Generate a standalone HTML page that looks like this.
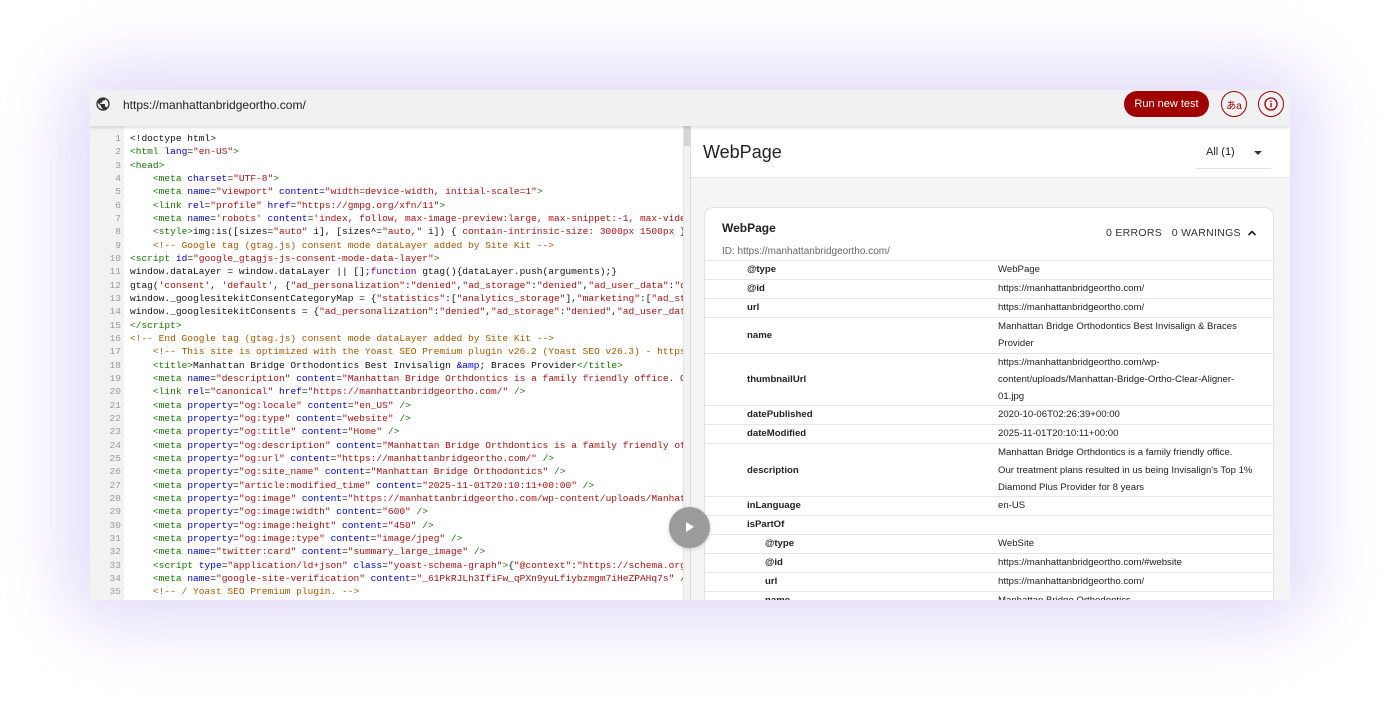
<!DOCTYPE html>
<html><head><meta charset="utf-8"><style>
*{margin:0;padding:0;box-sizing:border-box}
body{width:1400px;height:710px;background:#fff;position:relative;overflow:hidden;font-family:"Liberation Sans",sans-serif}
.glow{position:absolute;left:90px;top:90px;width:1200px;height:510px;border-radius:30px;box-shadow:0 0 60px 30px rgba(200,185,245,.45)}
.win{position:absolute;left:90px;top:90px;width:1200px;height:510px;background:#fff;overflow:hidden}
.top{position:absolute;left:0;top:0;width:1200px;height:36px;background:#f1f1f3;box-shadow:0 2px 3px rgba(0,0,0,.12);z-index:3}
.url{position:absolute;left:33px;top:8px;font-size:12px;color:#222}
.btn{position:absolute;left:1034px;top:1px;width:85px;height:26px;border-radius:13px;background:#a10000;color:#fff;font-size:11px;display:flex;align-items:center;justify-content:center}
.circ{position:absolute;top:1px;width:26px;height:26px;border-radius:50%;border:1.3px solid #a10000;color:#a10000;font-size:10px;display:flex;align-items:center;justify-content:center;white-space:nowrap;font-family:"Liberation Sans","Noto Sans CJK JP",sans-serif}
.code{position:absolute;left:0;top:36px;width:600px;height:474px;overflow:hidden;background:#fff}
.gut{position:absolute;left:0;top:0;width:34px;height:474px;background:#f2f2f2}
.lines{position:absolute;left:0;top:6px;font-family:"Liberation Mono",monospace;font-size:9.55px;line-height:13.33px;white-space:pre;color:#111}
.ln{display:inline-block;width:31px;text-align:right;color:#999;margin-right:9px}
.t{color:#170}.a{color:#00c}.s{color:#a11}.c{color:#a50}.k{color:#708}
.sb{position:absolute;left:593px;top:0;width:7px;height:474px;background:#f3f3f3;border-left:1px solid #e5e5e5}
.sb i{position:absolute;left:0;top:0;width:6px;height:20px;background:#d6d6d6}
.right{position:absolute;left:600px;top:36px;width:600px;height:474px;background:#f5f5f6;border-left:1px solid #ddd;overflow:hidden}
.hdr{position:absolute;left:0;top:0;width:600px;height:52px;background:#fff;border-bottom:1px solid #e6e6e6}
.hdr h1{position:absolute;left:12px;top:16px;font-weight:normal;font-size:18px;color:#222}
.all{position:absolute;left:505px;top:18px;width:75px;height:25px;border-bottom:1px solid #e0e0e0;font-size:11px;color:#222}
.card{position:absolute;left:13px;top:81px;width:570px;height:420px;background:#fff;border:1px solid #e3e3e3;border-radius:9px}
.ct{position:absolute;left:17px;top:13px;font-size:12px;font-weight:bold;color:#222}
.cid{position:absolute;left:17px;top:38px;font-size:10px;color:#666}
.err{position:absolute;left:401px;top:19px;font-size:10.5px;color:#333;letter-spacing:.3px}
table{position:absolute;left:0;top:52px;width:569px;border-collapse:collapse;font-size:9.6px;color:#222}
td{border-top:1px solid #e6e6e6;line-height:17.3px;vertical-align:middle;padding:0}
tr.o td{line-height:18px}
td.k1{padding-left:42px;width:293px;font-weight:bold;color:#222}
td.k2{padding-left:60px;font-weight:bold}
.play{position:absolute;left:669px;top:507px;width:41px;height:41px;border-radius:50%;background:#9b9b9b;z-index:5;box-shadow:0 1px 4px rgba(0,0,0,.2)}
.play:after{content:"";position:absolute;left:17px;top:15px;border-left:8px solid #fff;border-top:5.5px solid transparent;border-bottom:5.5px solid transparent}
</style></head><body>
<div class="glow"></div>
<div class="win">
<div class="top">
<svg style="position:absolute;left:5px;top:6px" width="16" height="16" viewBox="0 0 24 24"><path fill="#333" d="M12 2a10 10 0 100 20 10 10 0 000-20zm-1 17.9A8 8 0 014.1 10.2L9 15v1a2 2 0 002 2zm6.9-2.5A2 2 0 0016 16h-1v-3a1 1 0 00-1-1H8v-2h2a1 1 0 001-1V7h2a2 2 0 002-2v-.4a8 8 0 012.9 12.8z"/></svg>
<div class="url">https://manhattanbridgeortho.com/</div>
<div class="btn">Run new test</div>
<div class="circ" style="left:1131px">あa</div>
<div class="circ" style="left:1168px"><svg width="16" height="16" viewBox="0 0 24 24"><circle cx="12" cy="12" r="9" fill="none" stroke="#a10000" stroke-width="2"/><rect x="11" y="10.5" width="2" height="6.5" fill="#a10000"/><rect x="11" y="7" width="2" height="2" fill="#a10000"/></svg></div>
</div>
<div class="code"><div class="gut"></div>
<div class="lines"><span class="ln">1</span>&lt;!doctype html&gt;
<span class="ln">2</span><span class="t">&lt;html</span> <span class="a">lang</span>=<span class="s">"en-US"</span><span class="t">&gt;</span>
<span class="ln">3</span><span class="t">&lt;head&gt;</span>
<span class="ln">4</span>    <span class="t">&lt;meta</span> <span class="a">charset</span>=<span class="s">"UTF-8"</span><span class="t">&gt;</span>
<span class="ln">5</span>    <span class="t">&lt;meta</span> <span class="a">name</span>=<span class="s">"viewport"</span> <span class="a">content</span>=<span class="s">"width=device-width, initial-scale=1"</span><span class="t">&gt;</span>
<span class="ln">6</span>    <span class="t">&lt;link</span> <span class="a">rel</span>=<span class="s">"profile"</span> <span class="a">href</span>=<span class="s">"https://gmpg.org/xfn/11"</span><span class="t">&gt;</span>
<span class="ln">7</span>    <span class="t">&lt;meta</span> <span class="a">name</span>=<span class="s">'robots'</span> <span class="a">content</span>=<span class="s">'index, follow, max-image-preview:large, max-snippet:-1, max-video-preview:-1'</span> <span class="t">/&gt;</span>
<span class="ln">8</span>    <span class="t">&lt;style&gt;</span>img:is([sizes=<span class="s">"auto"</span> i], [sizes^=<span class="s">"auto,"</span> i]) { <span class="s">contain-intrinsic-size: 3000px 1500px</span> }<span class="t">&lt;/style&gt;</span>
<span class="ln">9</span>    <span class="c">&lt;!-- Google tag (gtag.js) consent mode dataLayer added by Site Kit --&gt;</span>
<span class="ln">10</span><span class="t">&lt;script</span> <span class="a">id</span>=<span class="s">"google_gtagjs-js-consent-mode-data-layer"</span><span class="t">&gt;</span>
<span class="ln">11</span>window.dataLayer = window.dataLayer || [];<span class="k">function</span> gtag(){dataLayer.push(arguments);}
<span class="ln">12</span>gtag(<span class="s">'consent'</span>, <span class="s">'default'</span>, {<span class="s">"ad_personalization"</span>:<span class="s">"denied"</span>,<span class="s">"ad_storage"</span>:<span class="s">"denied"</span>,<span class="s">"ad_user_data"</span>:<span class="s">"denied"</span>
<span class="ln">13</span>window._googlesitekitConsentCategoryMap = {<span class="s">"statistics"</span>:[<span class="s">"analytics_storage"</span>],<span class="s">"marketing"</span>:[<span class="s">"ad_storage"</span>
<span class="ln">14</span>window._googlesitekitConsents = {<span class="s">"ad_personalization"</span>:<span class="s">"denied"</span>,<span class="s">"ad_storage"</span>:<span class="s">"denied"</span>,<span class="s">"ad_user_data"</span>
<span class="ln">15</span><span class="t">&lt;/script&gt;</span>
<span class="ln">16</span><span class="c">&lt;!-- End Google tag (gtag.js) consent mode dataLayer added by Site Kit --&gt;</span>
<span class="ln">17</span>    <span class="c">&lt;!-- This site is optimized with the Yoast SEO Premium plugin v26.2 (Yoast SEO v26.3) - https://yoast.com/</span>
<span class="ln">18</span>    <span class="t">&lt;title&gt;</span>Manhattan Bridge Orthodontics Best Invisalign <span class="a">&amp;amp;</span> Braces Provider<span class="t">&lt;/title&gt;</span>
<span class="ln">19</span>    <span class="t">&lt;meta</span> <span class="a">name</span>=<span class="s">"description"</span> <span class="a">content</span>=<span class="s">"Manhattan Bridge Orthdontics is a family friendly office. Our</span>
<span class="ln">20</span>    <span class="t">&lt;link</span> <span class="a">rel</span>=<span class="s">"canonical"</span> <span class="a">href</span>=<span class="s">"https://manhattanbridgeortho.com/"</span> <span class="t">/&gt;</span>
<span class="ln">21</span>    <span class="t">&lt;meta</span> <span class="a">property</span>=<span class="s">"og:locale"</span> <span class="a">content</span>=<span class="s">"en_US"</span> <span class="t">/&gt;</span>
<span class="ln">22</span>    <span class="t">&lt;meta</span> <span class="a">property</span>=<span class="s">"og:type"</span> <span class="a">content</span>=<span class="s">"website"</span> <span class="t">/&gt;</span>
<span class="ln">23</span>    <span class="t">&lt;meta</span> <span class="a">property</span>=<span class="s">"og:title"</span> <span class="a">content</span>=<span class="s">"Home"</span> <span class="t">/&gt;</span>
<span class="ln">24</span>    <span class="t">&lt;meta</span> <span class="a">property</span>=<span class="s">"og:description"</span> <span class="a">content</span>=<span class="s">"Manhattan Bridge Orthdontics is a family friendly office</span>
<span class="ln">25</span>    <span class="t">&lt;meta</span> <span class="a">property</span>=<span class="s">"og:url"</span> <span class="a">content</span>=<span class="s">"https://manhattanbridgeortho.com/"</span> <span class="t">/&gt;</span>
<span class="ln">26</span>    <span class="t">&lt;meta</span> <span class="a">property</span>=<span class="s">"og:site_name"</span> <span class="a">content</span>=<span class="s">"Manhattan Bridge Orthodontics"</span> <span class="t">/&gt;</span>
<span class="ln">27</span>    <span class="t">&lt;meta</span> <span class="a">property</span>=<span class="s">"article:modified_time"</span> <span class="a">content</span>=<span class="s">"2025-11-01T20:10:11+00:00"</span> <span class="t">/&gt;</span>
<span class="ln">28</span>    <span class="t">&lt;meta</span> <span class="a">property</span>=<span class="s">"og:image"</span> <span class="a">content</span>=<span class="s">"https://manhattanbridgeortho.com/wp-content/uploads/Manhattan</span>
<span class="ln">29</span>    <span class="t">&lt;meta</span> <span class="a">property</span>=<span class="s">"og:image:width"</span> <span class="a">content</span>=<span class="s">"600"</span> <span class="t">/&gt;</span>
<span class="ln">30</span>    <span class="t">&lt;meta</span> <span class="a">property</span>=<span class="s">"og:image:height"</span> <span class="a">content</span>=<span class="s">"450"</span> <span class="t">/&gt;</span>
<span class="ln">31</span>    <span class="t">&lt;meta</span> <span class="a">property</span>=<span class="s">"og:image:type"</span> <span class="a">content</span>=<span class="s">"image/jpeg"</span> <span class="t">/&gt;</span>
<span class="ln">32</span>    <span class="t">&lt;meta</span> <span class="a">name</span>=<span class="s">"twitter:card"</span> <span class="a">content</span>=<span class="s">"summary_large_image"</span> <span class="t">/&gt;</span>
<span class="ln">33</span>    <span class="t">&lt;script</span> <span class="a">type</span>=<span class="s">"application/ld+json"</span> <span class="a">class</span>=<span class="s">"yoast-schema-graph"</span><span class="t">&gt;</span>{<span class="s">"@context"</span>:<span class="s">"https://schema.org"</span>
<span class="ln">34</span>    <span class="t">&lt;meta</span> <span class="a">name</span>=<span class="s">"google-site-verification"</span> <span class="a">content</span>=<span class="s">"_61PkRJLh3IfiFw_qPXn9yuLfiybzmgm7iHeZPAHq7s"</span> <span class="t">/&gt;</span>
<span class="ln">35</span>    <span class="c">&lt;!-- / Yoast SEO Premium plugin. --&gt;</span></div>
<div class="sb"><i></i></div>
</div>
<div class="right">
<div class="hdr"><h1>WebPage</h1><div class="all"><span style="position:absolute;left:10px;top:2px">All (1)</span><span style="position:absolute;left:58px;top:7px;border-top:4px solid #333;border-left:4px solid transparent;border-right:4px solid transparent"></span></div></div>
<div class="card">
<div class="ct">WebPage</div>
<div class="cid">ID: https://manhattanbridgeortho.com/</div>
<div class="err">0 ERRORS &nbsp;&nbsp;0 WARNINGS</div>
<svg style="position:absolute;left:542px;top:21px" width="10" height="8" viewBox="0 0 10 8"><path d="M1.5 6L5 2.5 8.5 6" fill="none" stroke="#222" stroke-width="1.6"/></svg>
<table>
<tr class="o"><td class="k1">@type</td><td>WebPage</td></tr>
<tr class="o"><td class="k1">@id</td><td>https://manhattanbridgeortho.com/</td></tr>
<tr class="o"><td class="k1">url</td><td>https://manhattanbridgeortho.com/</td></tr>
<tr><td class="k1">name</td><td>Manhattan Bridge Orthodontics Best Invisalign &amp; Braces<br>Provider</td></tr>
<tr><td class="k1">thumbnailUrl</td><td>https://manhattanbridgeortho.com/wp-<br>content/uploads/Manhattan-Bridge-Ortho-Clear-Aligner-<br>01.jpg</td></tr>
<tr class="o"><td class="k1">datePublished</td><td>2020-10-06T02:26:39+00:00</td></tr>
<tr class="o"><td class="k1">dateModified</td><td>2025-11-01T20:10:11+00:00</td></tr>
<tr><td class="k1">description</td><td>Manhattan Bridge Orthdontics is a family friendly office.<br>Our treatment plans resulted in us being Invisalign's Top 1%<br>Diamond Plus Provider for 8 years</td></tr>
<tr class="o"><td class="k1">inLanguage</td><td>en-US</td></tr>
<tr class="o"><td class="k1">isPartOf</td><td></td></tr>
<tr class="o"><td class="k1 k2">@type</td><td>WebSite</td></tr>
<tr class="o"><td class="k1 k2">@id</td><td>https://manhattanbridgeortho.com/#website</td></tr>
<tr class="o"><td class="k1 k2">url</td><td>https://manhattanbridgeortho.com/</td></tr>
<tr class="o"><td class="k1 k2">name</td><td>Manhattan Bridge Orthodontics</td></tr>
</table>
</div>
</div>
</div>
<div class="play"></div>
</body></html>
